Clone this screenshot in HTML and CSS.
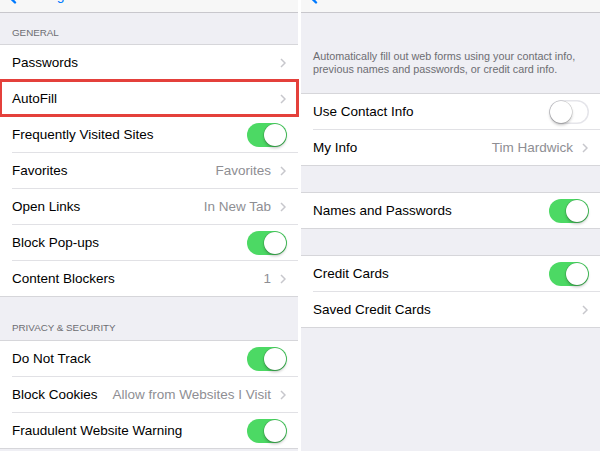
FILE: index.html
```html
<!DOCTYPE html>
<html lang="en">
<head>
    <meta charset="UTF-8">
    <meta name="viewport" content="width=device-width, initial-scale=1.0">
    <title>Safari AutoFill</title>
    <link rel="stylesheet" href="styles.css">
</head>
<body>
<div class="screen">

    <!-- Safari settings -->
    <section class="panel">
        <div class="nav">
            <span class="back">
                <svg width="10" height="15" viewBox="0 0 10 15"><polyline points="8,1.5 2,7.5 8,13.5" /></svg>
                Settings
            </span>
        </div>

        <div class="section-title">General</div>
        <div class="group">
            <div class="row"><div class="cell"><span class="label">Passwords</span><svg class="chevron" width="6" height="10" viewBox="0 0 6 10"><polyline points="1,1 5,5 1,9" /></svg></div></div>
            <div class="row highlighted"><div class="cell"><span class="label">AutoFill</span><svg class="chevron" width="6" height="10" viewBox="0 0 6 10"><polyline points="1,1 5,5 1,9" /></svg></div></div>
            <div class="row"><div class="cell"><span class="label">Frequently Visited Sites</span><span class="switch on"></span></div></div>
            <div class="row"><div class="cell"><span class="label">Favorites</span><span class="detail">Favorites</span><svg class="chevron" width="6" height="10" viewBox="0 0 6 10"><polyline points="1,1 5,5 1,9" /></svg></div></div>
            <div class="row"><div class="cell"><span class="label">Open Links</span><span class="detail">In New Tab</span><svg class="chevron" width="6" height="10" viewBox="0 0 6 10"><polyline points="1,1 5,5 1,9" /></svg></div></div>
            <div class="row"><div class="cell"><span class="label">Block Pop-ups</span><span class="switch on"></span></div></div>
            <div class="row"><div class="cell"><span class="label">Content Blockers</span><span class="detail">1</span><svg class="chevron" width="6" height="10" viewBox="0 0 6 10"><polyline points="1,1 5,5 1,9" /></svg></div></div>
        </div>

        <div class="section-title tall">Privacy &amp; Security</div>
        <div class="group">
            <div class="row"><div class="cell"><span class="label">Do Not Track</span><span class="switch on"></span></div></div>
            <div class="row"><div class="cell"><span class="label">Block Cookies</span><span class="detail">Allow from Websites I Visit</span><svg class="chevron" width="6" height="10" viewBox="0 0 6 10"><polyline points="1,1 5,5 1,9" /></svg></div></div>
            <div class="row"><div class="cell"><span class="label">Fraudulent Website Warning</span><span class="switch on"></span></div></div>
        </div>
    </section>

    <!-- AutoFill -->
    <section class="panel wide">
        <div class="nav">
            <span class="back">
                <svg width="10" height="15" viewBox="0 0 10 15"><polyline points="8,1.5 2,7.5 8,13.5" /></svg>
                Safari
            </span>
        </div>

        <p class="description">Automatically fill out web forms using your contact info,<br>previous names and passwords, or credit card info.</p>

        <div class="group">
            <div class="row"><div class="cell"><span class="label">Use Contact Info</span><span class="switch"></span></div></div>
            <div class="row"><div class="cell"><span class="label">My Info</span><span class="detail">Tim Hardwick</span><svg class="chevron" width="6" height="10" viewBox="0 0 6 10"><polyline points="1,1 5,5 1,9" /></svg></div></div>
        </div>

        <div class="spacer"></div>
        <div class="group">
            <div class="row"><div class="cell"><span class="label">Names and Passwords</span><span class="switch on"></span></div></div>
        </div>

        <div class="spacer"></div>
        <div class="group">
            <div class="row"><div class="cell"><span class="label">Credit Cards</span><span class="switch on"></span></div></div>
            <div class="row"><div class="cell"><span class="label">Saved Credit Cards</span><svg class="chevron" width="6" height="10" viewBox="0 0 6 10"><polyline points="1,1 5,5 1,9" /></svg></div></div>
        </div>
    </section>

</div>
</body>
</html>
```

FILE: styles.css
```css
body {
    margin: 0;
    background: #fff;
    font-family: "Liberation Sans", Arial, sans-serif;
    color: #000;
}

.screen {
    display: flex;
    gap: 3px;
    height: 451px;
    overflow: hidden;
}

.panel {
    width: 298px;
    background: #efeff4;
}

.panel.wide {
    flex: 1;
}

/* Navigation bar, cut off at the top of the shot */
.nav {
    height: 12px;
    background: #f7f7f7;
    border-bottom: 1px solid #c8c7cc;
    overflow: hidden;
    display: flex;
    align-items: flex-end;
    padding-left: 7px;
}

.back {
    display: flex;
    align-items: flex-end;
    gap: 4px;
    margin-bottom: 10px;
    font-size: 14px;
    line-height: 14px;
    color: #007aff;
}

.back svg {
    margin-bottom: -2px;
}

.back polyline {
    fill: none;
    stroke: #007aff;
    stroke-width: 2.4;
    stroke-linecap: round;
    stroke-linejoin: round;
}

.section-title {
    box-sizing: border-box;
    height: 31px;
    padding: 0 12px 6px;
    display: flex;
    align-items: flex-end;
    font-size: 9.8px;
    text-transform: uppercase;
    color: #6d6d72;
}

.section-title.tall {
    height: 43px;
    padding-bottom: 7px;
}

.description {
    margin: 0;
    padding: 37px 12px 17px;
    font-size: 10.8px;
    line-height: 13px;
    color: #6d6d72;
    white-space: nowrap;
}

.spacer {
    height: 26px;
}

/* Table groups */
.group {
    background: #fff;
    border-top: 1px solid #d6d6da;
    border-bottom: 1px solid #d6d6da;
}

.row {
    padding-left: 12px;
    background: #fff;
}

.row + .row .cell {
    border-top: 1px solid #e1e1e5;
}

.row.highlighted {
    outline: 3px solid #e4403b;
    outline-offset: -2px;
}

.cell {
    height: 35px;
    display: flex;
    align-items: center;
    padding-right: 11px;
}

.label {
    flex: 1;
    font-size: 13.5px;
    white-space: nowrap;
}

.detail {
    font-size: 13.5px;
    color: #8e8e93;
    margin-right: 9px;
    white-space: nowrap;
}

.chevron {
    margin-right: 1px;
}

.chevron polyline {
    fill: none;
    stroke: #c7c7cc;
    stroke-width: 1.5;
}

/* Switches */
.switch {
    box-sizing: border-box;
    width: 40px;
    height: 24px;
    padding: 1px;
    border-radius: 12px;
    background: #fff;
    box-shadow: inset 0 0 0 1.5px #e5e5ea;
    display: flex;
    justify-content: flex-start;
}

.switch.on {
    background: #4cd964;
    box-shadow: none;
    justify-content: flex-end;
}

.switch::after {
    content: "";
    width: 22px;
    height: 22px;
    border-radius: 50%;
    background: #fff;
    box-shadow: 0 0 0 0.5px rgba(0, 0, 0, 0.2), 0 2px 3px rgba(0, 0, 0, 0.25);
}
```
